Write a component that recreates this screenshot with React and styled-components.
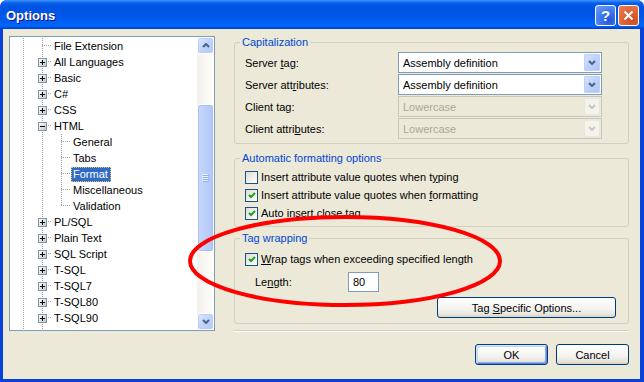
import React from "react";
import styled, { createGlobalStyle } from "styled-components";

const GlobalStyle = createGlobalStyle`
  html, body { margin: 0; padding: 0; background: #fff; }
  body { font-family: "Liberation Sans", Arial, sans-serif; font-size: 11px; color: #000; }
`;

const Window = styled.div`
  position: relative;
  width: 644px;
  height: 382px;
  display: flex;
  flex-direction: column;
  border-radius: 7px 7px 0 0;
  overflow: hidden;
  background: #0842d8;
`;

const TitleBar = styled.div`
  height: 29px;
  box-sizing: border-box;
  flex: none;
  display: flex;
  align-items: center;
  padding: 2px 5px 0 6px;
  background: linear-gradient(180deg, #3d95ff 0, #0a5fea 3px, #0054e3 6px, #0055e6 50%, #0062f5 80%, #0066fc 88%, #005bf0 93%, #0045d0 97%, #003dc0 100%);
`;

const Title = styled.div`
  flex: 1;
  color: #fff;
  font-weight: bold;
  font-size: 13px;
  text-shadow: 1px 1px #0f1089;
`;

const CaptionButton = styled.div`
  width: 21px;
  height: 21px;
  box-sizing: border-box;
  margin-left: 2px;
  border: 1px solid #fff;
  border-radius: 3px;
  display: flex;
  align-items: center;
  justify-content: center;
  color: #fff;
  font-weight: bold;
  font-size: 15px;
  background: ${(p) =>
    p.$close
      ? "radial-gradient(circle at 70% 75%, #cf4b22, #e0602f 40%, #e87b55 90%)"
      : "radial-gradient(circle at 70% 75%, #2456d8, #3c78ee 45%, #6d9ef5 95%)"};
`;

const Client = styled.div`
  flex: 1;
  margin: 0 4px 3px 3px;
  background: #ece9d8;
  display: flex;
  flex-direction: column;
  padding: 7px 11px 0 6px;
`;

const Main = styled.div`
  display: flex;
  gap: 19px;
`;

/* ---------- tree ---------- */

const Tree = styled.div`
  width: 206px;
  height: 295px;
  box-sizing: border-box;
  flex: none;
  border: 1px solid #7f9db9;
  background: #fff;
  display: flex;
`;

const TreeList = styled.div`
  flex: 1;
  overflow: hidden;
  padding: 1px 0 0 4px;
`;

const Row = styled.div`
  display: flex;
  height: 16px;
  align-items: center;
  white-space: nowrap;
`;

const dotsV = "repeating-linear-gradient(to bottom, #a0a0a0 0 1px, transparent 1px 2px)";
const dotsH = "repeating-linear-gradient(to right, #a0a0a0 0 1px, transparent 1px 2px)";

const Guide = styled.div`
  width: 19px;
  height: 16px;
  flex: none;
  display: flex;
  align-items: center;
  padding-left: 5px;
  box-sizing: border-box;
  background-image: ${(p) => [p.$v && dotsV, p.$h && dotsH].filter(Boolean).join(", ") || "none"};
  background-repeat: no-repeat;
  background-position: ${(p) => [p.$v && "9px 0", p.$h && "9px 7px"].filter(Boolean).join(", ") || "0 0"};
  background-size: ${(p) => [p.$v && (p.$v === "top" ? "1px 8px" : "1px 16px"), p.$h && "10px 1px"].filter(Boolean).join(", ") || "auto"};
`;

const Label = styled.span`
  height: 15px;
  line-height: 13px;
  box-sizing: border-box;
  padding: 0 2px 0 1px;
  border: 1px dotted ${(p) => (p.$selected ? "#e3c565" : "transparent")};
  background: ${(p) => (p.$selected ? "#316ac5" : "transparent")};
  color: ${(p) => (p.$selected ? "#fff" : "#000")};
`;

const Expander = ({ open }) => (
  <svg width="9" height="9" viewBox="0 0 9 9">
    <defs>
      <linearGradient id={open ? "eo" : "ec"} x1="0" y1="0" x2="1" y2="1">
        <stop offset="0" stopColor="#ffffff" />
        <stop offset="1" stopColor="#c6c2b2" />
      </linearGradient>
    </defs>
    <rect x="0.5" y="0.5" width="8" height="8" fill={`url(#${open ? "eo" : "ec"})`} stroke="#7898b5" />
    <path d="M2 4.5 H7" stroke="#000" />
    {!open && <path d="M4.5 2 V7" stroke="#000" />}
  </svg>
);

const ScrollBar = styled.div`
  width: 17px;
  flex: none;
  display: flex;
  flex-direction: column;
  background: linear-gradient(to right, #f3f1ec, #fefefb);
`;

const ScrollButton = styled.div`
  height: 17px;
  box-sizing: border-box;
  border: 1px solid #fff;
  display: flex;
  align-items: center;
  justify-content: center;
  border-radius: 3px;
  background: linear-gradient(135deg, #e2eafe, #c1d3fb 50%, #b4c8f6);
  box-shadow: inset 0 0 0 1px #b9cdf6;
`;

const Track = styled.div`
  flex: 1;
  display: flex;
  flex-direction: column;
`;

const Thumb = styled.div`
  box-sizing: border-box;
  border: 1px solid #fff;
  border-radius: 3px;
  display: flex;
  align-items: center;
  justify-content: center;
  background: linear-gradient(to right, #c9d8fc, #bccffb 50%, #b2c7f7);
  box-shadow: inset 0 0 0 1px #aac0f2;
`;

const Chevron = ({ up, color = "#4d6185" }) => (
  <svg width="8" height="5" viewBox="0 0 8 5">
    <polyline points={up ? "1,4 4,1 7,4" : "1,1 4,4 7,1"} fill="none" stroke={color} strokeWidth="2" />
  </svg>
);

const Grip = () => (
  <svg width="7" height="8" viewBox="0 0 7 8">
    {[0, 2, 4, 6].map((y) => (
      <g key={y}>
        <path d={`M0 ${y + 0.5} H6`} stroke="#eef4fe" />
        <path d={`M1 ${y + 1.5} H7`} stroke="#8cb0f8" />
      </g>
    ))}
  </svg>
);

/* ---------- right side ---------- */

const Pane = styled.div`
  flex: 1;
  display: flex;
  flex-direction: column;
`;

const Group = styled.fieldset`
  margin: ${(p) => p.$top || 0}px 0 0 0;
  padding: ${(p) => p.$pad || "3px 12px 4px 10px"};
  border: 1px solid #d0d0bf;
  border-radius: 3px;
  min-width: 0;
`;

const Legend = styled.legend`
  margin-left: -5px;
  padding: 0 2px;
  color: #0046d5;
  line-height: 13px;
  font-size: 11px;
`;

const FieldRow = styled.div`
  display: flex;
  align-items: center;
  height: 21px;
  & + & { margin-top: 1px; }
`;

const FieldLabel = styled.span`
  width: ${(p) => p.$w}px;
  margin-left: ${(p) => p.$indent || 0}px;
  flex: none;
`;

const Combo = styled.div`
  width: 204px;
  height: 21px;
  box-sizing: border-box;
  border: 1px solid ${(p) => (p.$disabled ? "#c9c7ba" : "#7f9db9")};
  background: ${(p) => (p.$disabled ? "#ece9d8" : "#fff")};
  color: ${(p) => (p.$disabled ? "#aca899" : "#000")};
  display: flex;
  align-items: center;
  padding: 1px;
`;

const ComboText = styled.span`
  flex: 1;
  padding-left: 3px;
`;

const DropButton = styled.div`
  width: 16px;
  height: 17px;
  box-sizing: border-box;
  border: 1px solid ${(p) => (p.$disabled ? "#e8e6dd" : "#bdd0f7")};
  border-radius: 1px;
  display: flex;
  align-items: center;
  justify-content: center;
  background: ${(p) =>
    p.$disabled ? "#f4f3ee" : "linear-gradient(135deg, #d6e2fd, #bfd1fb 50%, #aec5f6)"};
`;

const CheckRow = styled.div`
  display: flex;
  align-items: center;
  gap: 3px;
  height: 18px;
`;

const Box = styled.span`
  width: 13px;
  height: 13px;
  box-sizing: border-box;
  flex: none;
  border: 1px solid #1c5180;
  background: linear-gradient(135deg, #dcdcd7, #fff);
  display: flex;
  align-items: center;
  justify-content: center;
`;

const U = styled.span`
  text-decoration: underline;
`;

const TextBox = styled.div`
  width: 31px;
  height: 20px;
  box-sizing: border-box;
  border: 1px solid #7f9db9;
  background: #fff;
  padding-left: 4px;
  line-height: 18px;
`;

const ButtonRow = styled.div`
  display: flex;
  justify-content: flex-end;
  gap: ${(p) => p.$gap || 0}px;
  margin-top: ${(p) => p.$top || 0}px;
`;

const Button = styled.div`
  width: ${(p) => p.$w}px;
  height: 21px;
  box-sizing: border-box;
  border: 1px solid #003c74;
  border-radius: 3px;
  display: flex;
  align-items: center;
  justify-content: center;
  white-space: pre;
  background: linear-gradient(180deg, #fff, #f3f2ee 60%, #e6e3da 88%, #d6d0c5);
  box-shadow: ${(p) =>
    p.$default
      ? "inset 1px 1px #cee7ff, inset -1px -1px #6982ee, inset 2px 2px #bcd4f6, inset -2px -2px #89ade4"
      : "none"};
`;

const Separator = styled.div`
  margin-top: 6px;
  border-top: 1px solid #d0d0bf;
  border-bottom: 1px solid #fff;
`;

const Annotation = styled.svg`
  position: absolute;
  left: 0;
  top: 0;
  pointer-events: none;
`;

const CheckMark = () => (
  <svg width="8" height="7" viewBox="0 0 8 7">
    <polyline points="1,3 3,5 7,1" fill="none" stroke="#21a121" strokeWidth="2" />
  </svg>
);

const CheckBox = ({ checked, children }) => (
  <CheckRow>
    <Box>{checked && <CheckMark />}</Box>
    <span>{children}</span>
  </CheckRow>
);

const TREE = [
  { label: "File Extension", level: 1 },
  { label: "All Languages", level: 1, box: "plus" },
  { label: "Basic", level: 1, box: "plus" },
  { label: "C#", level: 1, box: "plus" },
  { label: "CSS", level: 1, box: "plus" },
  { label: "HTML", level: 1, box: "minus" },
  { label: "General", level: 2 },
  { label: "Tabs", level: 2 },
  { label: "Format", level: 2, selected: true },
  { label: "Miscellaneous", level: 2 },
  { label: "Validation", level: 2, last: true },
  { label: "PL/SQL", level: 1, box: "plus" },
  { label: "Plain Text", level: 1, box: "plus" },
  { label: "SQL Script", level: 1, box: "plus" },
  { label: "T-SQL", level: 1, box: "plus" },
  { label: "T-SQL7", level: 1, box: "plus" },
  { label: "T-SQL80", level: 1, box: "plus" },
  { label: "T-SQL90", level: 1, box: "plus" },
  { label: "", level: 1 },
];

const COMBOS = [
  { label: <>Server <U>t</U>ag:</>, value: "Assembly definition" },
  { label: <>Server att<U>r</U>ibutes:</>, value: "Assembly definition" },
  { label: <>Client ta<U>g</U>:</>, value: "Lowercase", disabled: true },
  { label: <>Client attri<U>b</U>utes:</>, value: "Lowercase", disabled: true },
];

const TreeRow = ({ item }) => (
  <Row>
    <Guide $v="full" />
    {item.level === 1 ? (
      <Guide $v="full" $h>
        {item.box && <Expander open={item.box === "minus"} />}
      </Guide>
    ) : (
      <>
        <Guide $v="full" />
        <Guide $v={item.last ? "top" : "full"} $h />
      </>
    )}
    {item.label && <Label $selected={item.selected}>{item.label}</Label>}
  </Row>
);

export default function App() {
  return (
    <>
      <GlobalStyle />
      <Window>
        <TitleBar>
          <Title>Options</Title>
          <CaptionButton>?</CaptionButton>
          <CaptionButton $close>
            <svg width="11" height="11" viewBox="0 0 11 11">
              <path d="M1.5 1.5 L9.5 9.5 M9.5 1.5 L1.5 9.5" stroke="#fff" strokeWidth="2" />
            </svg>
          </CaptionButton>
        </TitleBar>
        <Client>
          <Main>
            <Tree>
              <TreeList>
                {TREE.map((item, i) => (
                  <TreeRow key={i} item={item} />
                ))}
              </TreeList>
              <ScrollBar>
                <ScrollButton>
                  <Chevron up />
                </ScrollButton>
                <Track>
                  <Thumb style={{ marginTop: 50, height: 148 }}>
                    <Grip />
                  </Thumb>
                </Track>
                <ScrollButton>
                  <Chevron />
                </ScrollButton>
              </ScrollBar>
            </Tree>
            <Pane>
              <Group>
                <Legend>Capitalization</Legend>
                {COMBOS.map((c, i) => (
                  <FieldRow key={i}>
                    <FieldLabel $w={153}>{c.label}</FieldLabel>
                    <Combo $disabled={c.disabled}>
                      <ComboText>{c.value}</ComboText>
                      <DropButton $disabled={c.disabled}>
                        <Chevron color={c.disabled ? "#c9c7ba" : "#4d6185"} />
                      </DropButton>
                    </Combo>
                  </FieldRow>
                ))}
              </Group>
              <Group $top={8} $pad="3px 12px 4px 10px">
                <Legend>Automatic formatting options</Legend>
                <CheckBox>Insert attribute value quotes when t<U>y</U>ping</CheckBox>
                <CheckBox checked>Insert attribute value quotes when <U>f</U>ormatting</CheckBox>
                <CheckBox checked>Auto insert close tag</CheckBox>
              </Group>
              <Group $top={5} $pad="5px 12px 5px 10px">
                <Legend>Tag wrapping</Legend>
                <CheckBox checked><U>W</U>rap tags when exceeding specified length</CheckBox>
                <FieldRow style={{ marginTop: 4, height: 20 }}>
                  <FieldLabel $w={93} $indent={10}>Le<U>n</U>gth:</FieldLabel>
                  <TextBox>80</TextBox>
                </FieldRow>
                <ButtonRow $top={5}>
                  <Button $w={179}>
                    <span>Tag <U>S</U>pecific Options...</span>
                  </Button>
                </ButtonRow>
              </Group>
              <Separator />
            </Pane>
          </Main>
          <ButtonRow $top={12} $gap={8}>
            <Button $w={73} $default>OK</Button>
            <Button $w={73}>Cancel</Button>
          </ButtonRow>
        </Client>
        <Annotation width="644" height="382" viewBox="0 0 644 382">
          <ellipse cx="345" cy="261" rx="155" ry="44" fill="none" stroke="#ff0000" strokeWidth="4" />
        </Annotation>
      </Window>
    </>
  );
}
